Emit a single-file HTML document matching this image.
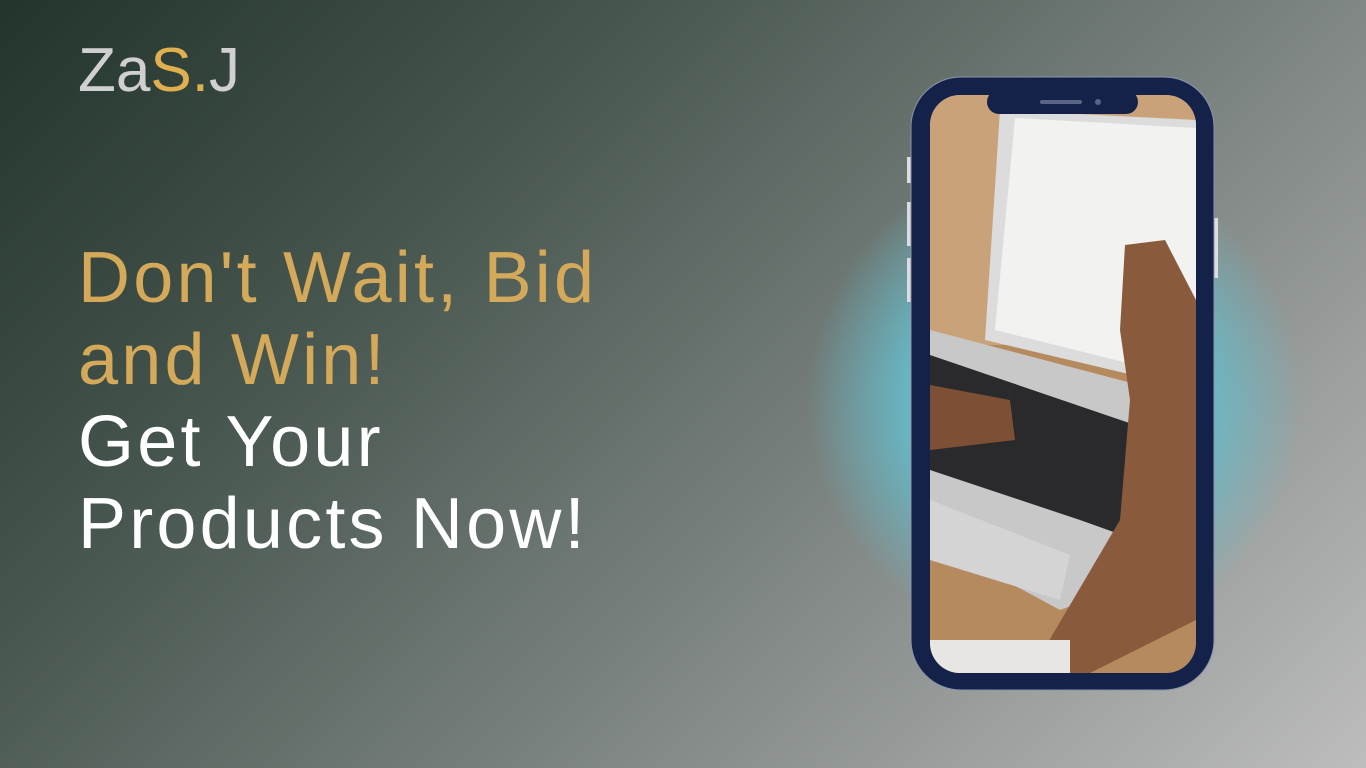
<!DOCTYPE html>
<html><head><meta charset="utf-8"><style>
html,body{margin:0;padding:0}
body{width:1366px;height:768px;overflow:hidden;position:relative;font-family:"Liberation Sans",sans-serif;
background:linear-gradient(135deg,#22342c 0%,#47564f 30%,#79817e 60%,#bdbdbd 100%);}
.glow{position:absolute;left:805px;top:150px;width:500px;height:500px;border-radius:50%;
background:radial-gradient(circle,rgba(105,200,215,1) 0%,rgba(100,190,205,0.85) 42%,rgba(100,175,190,0) 70%);}
.t{position:absolute;left:78px;font-size:72px;line-height:82px;letter-spacing:3.2px}
.logo{position:absolute;left:78px;top:36px;font-size:62px;line-height:70px}
</style></head><body>
<div class="glow"></div>
<div class="logo"><span style="color:#d0d0d0">Za</span><span style="color:#e0b050">S.</span><span style="color:#d0d0d0">J</span></div>
<div class="t" style="top:237px;color:#d4a95a">Don't Wait, Bid<br>and Win!</div>
<div class="t" style="top:401px;color:#ffffff">Get Your<br>Products Now!</div>
<svg style="position:absolute;left:0;top:0" width="1366" height="768">
<defs><clipPath id="sc"><rect x="930" y="95" width="266" height="578" rx="30"/></clipPath></defs>
<rect x="907" y="157" width="4" height="26" fill="#ddd"/>
<rect x="907" y="202" width="4" height="44" fill="#ddd"/>
<rect x="907" y="258" width="4" height="44" fill="#ddd"/>
<rect x="1214" y="218" width="4" height="60" fill="#ddd"/>
<rect x="911" y="77" width="303" height="613" rx="50" fill="#14224a" stroke="#8a94a8" stroke-width="1"/>
<g clip-path="url(#sc)">
<rect x="930" y="95" width="266" height="578" fill="#b58a5e"/>
<rect x="930" y="95" width="266" height="250" fill="#c9a27a"/>
<polygon points="1000,110 1196,120 1196,390 985,340" fill="#dcdcdc"/>
<polygon points="1015,118 1196,128 1196,380 995,330" fill="#f2f2f0"/>
<polygon points="930,330 1196,400 1196,560 1060,610 930,540" fill="#c8c8c8"/>
<polygon points="930,355 1150,430 1150,545 1080,520 930,470" fill="#2a2a2c"/>
<polygon points="930,500 1070,555 1060,600 930,560" fill="#d4d4d4"/>
<polygon points="1125,245 1165,240 1196,300 1196,620 1090,673 1030,673 1120,520 1130,400 1120,330" fill="#8a5a3c"/>
<polygon points="930,385 1010,400 1015,440 930,450" fill="#7d5036"/>
<rect x="930" y="640" width="140" height="33" fill="#e8e6e2"/>
</g>
<rect x="987" y="90" width="151" height="24" rx="12" fill="#14224a"/>
<rect x="1040" y="100" width="42" height="4" rx="2" fill="#5a6585"/>
<circle cx="1098" cy="102" r="3" fill="#5a6585"/>
</svg>
</body></html>
